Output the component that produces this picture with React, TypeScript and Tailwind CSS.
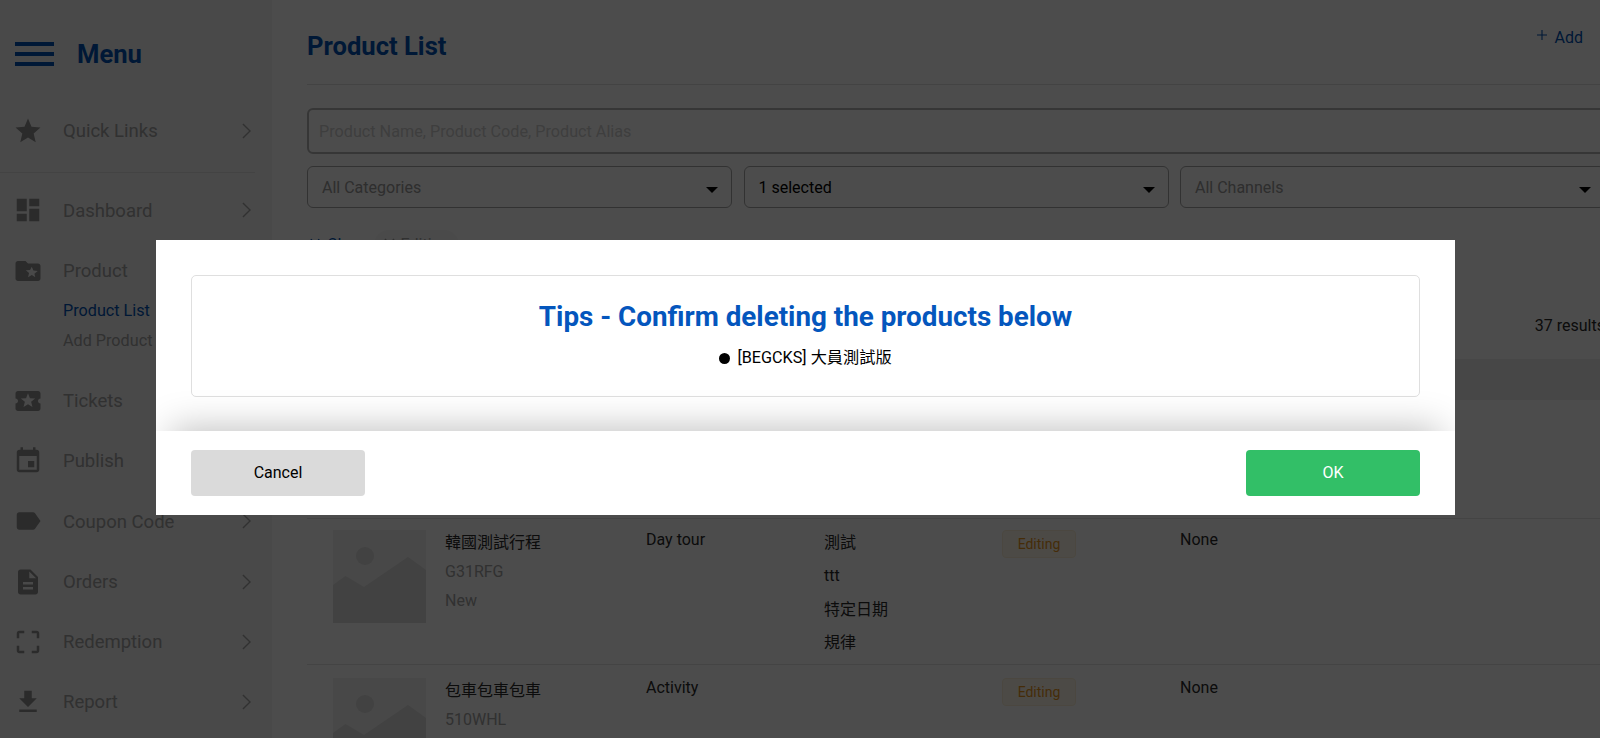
const icons: Record<string, string> = {
  star: 'M12 17.27L18.18 21l-1.64-7.03L22 9.24l-7.19-.61L12 2 9.19 8.63 2 9.24l5.46 4.73L5.82 21z',
  dashboard: 'M3 13h8V3H3v10zm0 8h8v-6H3v6zm10 0h8V11h-8v10zm0-18v6h8V3h-8z',
  folder: 'M20 6h-8l-2-2H4c-1.1 0-1.99.9-1.99 2L2 18c0 1.1.9 2 2 2h16c1.1 0 2-.9 2-2V8c0-1.1-.9-2-2-2zm-2.06 11L15 15.28 12.06 17l.78-3.33-2.59-2.24 3.41-.29L15 8.5l1.34 3.14 3.41.29-2.59 2.24.78 3.33z',
  ticket: 'M20 12c0-1.1.9-2 2-2V6c0-1.1-.9-2-2-2H4c-1.1 0-1.99.9-1.99 2v4c1.1 0 1.99.9 1.99 2s-.89 2-2 2v4c0 1.1.9 2 2 2h16c1.1 0 2-.9 2-2v-4c-1.1 0-2-.9-2-2zm-4.42 4.8L12 14.5l-3.58 2.3 1.08-4.12-3.29-2.69 4.24-.25L12 5.8l1.54 3.95 4.24.25-3.29 2.69 1.09 4.11z',
  event: 'M17 12h-5v5h5v-5zM16 1v2H8V1H6v2H5c-1.11 0-1.99.9-1.99 2L3 19c0 1.1.89 2 2 2h14c1.1 0 2-.9 2-2V5c0-1.1-.9-2-2-2h-1V1h-2zm3 18H5V8h14v11z',
  label: 'M17.63 5.84C17.27 5.33 16.67 5 16 5L5 5.01C3.9 5.01 3 5.9 3 7v10c0 1.1.9 1.99 2 1.99L16 19c.67 0 1.27-.33 1.63-.84L22 12l-4.37-6.16z',
  description: 'M14 2H6c-1.1 0-1.99.9-1.99 2L4 20c0 1.1.89 2 1.99 2H18c1.1 0 2-.9 2-2V8l-6-6zm2 16H8v-2h8v2zm0-4H8v-2h8v2zm-3-5V3.5L18.5 9H13z',
  crop: 'M3 5v4h2V5h4V3H5c-1.1 0-2 .9-2 2zm2 10H3v4c0 1.1.9 2 2 2h4v-2H5v-4zm14 4h-4v2h4c1.1 0 2-.9 2-2v-4h-2v4zm0-16h-4v2h4v4h2V5c0-1.1-.9-2-2-2z',
  download: 'M19 9h-4V3H9v6H5l7 7 7-7zM5 18v2h14v-2H5z',
};

const NavIcon = ({ name }: { name: string }) => (
  <svg viewBox="0 0 24 24" className="w-[30px] h-[30px] fill-[#8f8f8f] shrink-0">
    <path d={icons[name]} />
  </svg>
);

const NavItem = ({ icon, label, arrow = true }: { icon: string; label: string; arrow?: boolean }) => (
  <div className="h-[60.25px] flex items-center pl-[13px] pr-[21px]">
    <NavIcon name={icon} />
    <span className="ml-5 pt-[2px] text-[18.5px] text-[#a3a3a3]">{label}</span>
    {arrow && (
      <svg viewBox="0 0 10 18" className="ml-auto w-[9px] h-[16px] fill-none stroke-[#a3a3a3] stroke-[1.6]">
        <path d="M1 1l8 8-8 8" />
      </svg>
    )}
  </div>
);

const Sidebar = () => (
  <aside className="w-[272px] h-full shrink-0 bg-[#f5f5f5]">
    <div className="h-[100px] flex items-start pt-[42px] pl-[15px]">
      <div className="w-[39px] flex flex-col gap-[6.5px]">
        <div className="h-[3.5px] bg-[#0052b4]" />
        <div className="h-[3.5px] bg-[#0052b4]" />
        <div className="h-[3.5px] bg-[#0052b4]" />
      </div>
      <span className="ml-[23px] -mt-[1px] text-[25.6px] leading-[26px] font-bold text-[#0052b4]">Menu</span>
    </div>
    <div className="w-[255px] pt-[1px] pb-[11px] border-b border-[#e2e2e2]">
      <div className="w-[272px]">
        <NavItem icon="star" label="Quick Links" />
      </div>
    </div>
    <div className="pt-[7px]">
      <NavItem icon="dashboard" label="Dashboard" />
      <NavItem icon="folder" label="Product" arrow={false} />
      <div className="pl-[63px] -mt-[5px] mb-[15px] text-[16.2px] leading-[30px]">
        <div className="text-[#0052b4]">Product List</div>
        <div className="text-[#a3a3a3]">Add Product</div>
      </div>
      <NavItem icon="ticket" label="Tickets" arrow={false} />
      <NavItem icon="event" label="Publish" arrow={false} />
      <NavItem icon="label" label="Coupon Code" />
      <NavItem icon="description" label="Orders" />
      <NavItem icon="crop" label="Redemption" />
      <NavItem icon="download" label="Report" />
    </div>
  </aside>
);

const Select = ({ label, active }: { label: string; active?: boolean }) => (
  <div className="h-[42px] border border-[#a8a8a8] rounded-[6px] flex items-center pl-[14px] pr-[13px]">
    <span className={active ? 'pt-[2px] text-[16px] text-black' : 'pt-[2px] text-[16px] text-[#9a9a9a]'}>{label}</span>
    <svg viewBox="0 0 12 6" className="ml-auto mt-[6px] w-[12px] h-[6px] fill-black">
      <path d="M0 0h12L6 6z" />
    </svg>
  </div>
);

const CloseMark = ({ className }: { className: string }) => (
  <svg viewBox="0 0 12 12" className={`w-[11px] h-[11px] -mt-[3px] fill-none stroke-[1.5] ${className}`}>
    <path d="M1 1l10 10M11 1L1 11" />
  </svg>
);

const Thumb = () => (
  <svg viewBox="0 0 93 93" className="w-[93px] h-[93px] shrink-0 bg-[#f1f1f1]">
    <circle cx="32" cy="26" r="9" fill="#dcdcdc" />
    <path d="M0 55l12.5-9L31 57l44-30 18 13v53H0z" fill="#dcdcdc" />
  </svg>
);

const Row = ({ title, code, tag, type, items }: { title: string; code: string; tag?: string; type: string; items: string[] }) => (
  <div className="grid grid-cols-[339px_178px_178px_178px_1fr] pt-[13px] border-b border-[#e4e4e4] h-[148px] text-[16px] text-[#2a2a2a]">
    <div className="pl-[26px] flex gap-[19px]">
      <Thumb />
      <div className="-mt-[1px]">
        <div className="leading-[28px]">{title}</div>
        <div className="leading-[30px] text-[#a3a3a3]">{code}</div>
        {tag && <div className="leading-[28px] text-[#a3a3a3]">{tag}</div>}
      </div>
    </div>
    <div className="leading-[20px]">{type}</div>
    <div className="-mt-[1px]">
      {items.map((item) => (
        <div key={item} className="h-[33.3px] leading-[28px]">{item}</div>
      ))}
    </div>
    <div>
      <span className="inline-flex items-center justify-center w-[74px] h-[28px] rounded-[4px] border border-[#fbeed5] bg-[#fff9ec] text-[14px] text-[#e8951c]">Editing</span>
    </div>
    <div className="leading-[20px]">None</div>
  </div>
);

const Main = () => (
  <main className="flex-1 h-full overflow-hidden pl-[35px] bg-white">
    <div className="w-[1300px]">
      <div className="h-[85px] border-b border-[#e0e0e0] flex justify-between pr-[24px]">
        <h1 className="pt-[32px] text-[25.6px] leading-[28px] font-bold text-[#0052b4]">Product List</h1>
        <div className="pt-[27px] h-fit flex items-start text-[16px] text-[#0052b4]">
          <svg viewBox="0 0 12 12" className="w-[10px] h-[10px] mt-[3px] mr-[8px] fill-none stroke-[#0052b4] stroke-[1.3]">
            <path d="M6 0v12M0 6h12" />
          </svg>
          <span className="leading-[22px]">Add</span>
        </div>
      </div>
      <input
        placeholder="Product Name, Product Code, Product Alias"
        className="mt-[23px] block w-full h-[46px] px-[10px] border-2 border-[#b4b4b4] rounded-[6px] text-[16.2px] placeholder:text-[#d0d0d0]"
      />
      <div className="mt-[12px] grid grid-cols-[425px_425px_425px] gap-[11.5px]">
        <Select label="All Categories" />
        <Select label="1 selected" active />
        <Select label="All Channels" />
      </div>
      <div className="mt-[22px] h-[30px] flex items-center gap-[10px] text-[16px] whitespace-nowrap">
        <span className="pl-[3px] w-[57px] flex items-center gap-[7px] text-[#0052b4]">
          <CloseMark className="stroke-[#0052b4]" />
          Clear
        </span>
        <span className="w-[85px] h-[30px] rounded-full bg-[#f7f7f7] text-[#a3a3a3] flex items-center justify-center gap-[6px]">
          <CloseMark className="stroke-[#a3a3a3]" />
          Editing
        </span>
      </div>
      <div className="mt-[42px] h-[47px] flex items-center justify-end pr-[2px] text-[16px] text-[#2a2a2a]">37 results</div>
      <div className="mt-[10px] h-[41px] bg-[#eeeeee]" />
      <div className="h-[119px] border-b border-[#e4e4e4]" />
      <div className="-mt-[2px]">
        <Row title="韓國測試行程" code="G31RFG" tag="New" type="Day tour" items={['測試', 'ttt', '特定日期', '規律']} />
      </div>
      <Row title="包車包車包車" code="510WHL" type="Activity" items={[]} />
    </div>
  </main>
);

const ConfirmModal = () => (
  <div className="fixed inset-0 bg-black/70 pl-[156px] pt-[240px]">
    <div className="w-[1299px] h-[275px] bg-white flex flex-col overflow-hidden">
      <div className="flex-1 px-[35px] pt-[35px]">
        <div className="h-[122px] border border-[#dfdfdf] rounded-[5px] flex flex-col items-center pt-[22px]">
          <h2 className="text-[27.8px] leading-[38px] font-bold text-[#0456bd]">Tips - Confirm deleting the products below</h2>
          <div className="mt-[10px] flex items-center text-[16.2px] leading-[24px] text-black">
            <span className="w-[11px] h-[11px] rounded-full bg-black mr-[7px]" />
            [BEGCKS] 大員測試版
          </div>
        </div>
      </div>
      <div className="h-[84px] relative bg-white shadow-[0_-18px_36px_-15px_rgba(0,0,0,0.25)] px-[35px] flex items-center justify-between text-[16px]">
        <button className="w-[174px] h-[46px] rounded-[4px] bg-[#dadada] text-black">Cancel</button>
        <button className="w-[174px] h-[46px] rounded-[4px] bg-[#32bf67] text-white">OK</button>
      </div>
    </div>
  </div>
);

export default function App() {
  return (
    <div className="relative w-[1600px] h-[738px] flex overflow-hidden font-['Roboto','Noto_Sans_CJK_TC',sans-serif]">
      <Sidebar />
      <Main />
      <ConfirmModal />
    </div>
  );
}
